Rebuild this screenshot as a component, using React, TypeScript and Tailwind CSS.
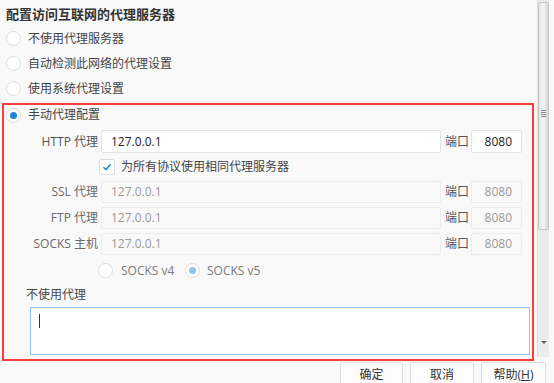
import React from 'react';

const font = { fontFamily: '"Open Sans", "Noto Sans CJK SC", sans-serif' };

function Radio({ checked, disabled }: { checked?: boolean; disabled?: boolean }) {
    return (
        <span className="w-[15px] h-[15px] rounded-full border border-[#dcdcdc] bg-white flex items-center justify-center shrink-0">
            {checked && (
                <span className={`w-[7px] h-[7px] rounded-full ${disabled ? 'bg-[#8fc5ea]' : 'bg-[#1e88d8]'}`} />
            )}
        </span>
    );
}

function ProxyRow({ label, host, port, enabled, rowClass }: { label: string; host: string; port: string; enabled?: boolean; rowClass: string }) {
    const box = enabled ? 'bg-white border-[#e3e3e3] text-[#222]' : 'bg-[#f9f9f9] border-[#ececec] text-[#9a9a9a]';
    return (
        <div className={`flex items-center ${rowClass}`}>
            <div className={`w-[95px] shrink-0 pr-[1px] text-right text-[12px] whitespace-nowrap ${enabled ? 'text-[#555]' : 'text-[#6a6a6a]'}`}>{label}</div>
            <div className={`ml-[2px] w-[340px] shrink-0 h-full border rounded-[2px] flex items-center pl-[9px] text-[12px] ${box}`}>{host}</div>
            <div className="ml-[4px] w-[24px] shrink-0 whitespace-nowrap text-[12px] text-[#555]">端口</div>
            <div className={`ml-[2px] w-[51px] shrink-0 h-full border rounded-[2px] flex items-center justify-end pr-[9px] text-[12px] ${box}`}>{port}</div>
        </div>
    );
}

export default function App() {
    return (
        <div className="w-[554px] h-[383px] overflow-hidden bg-[#f9f9f9] text-[#444]" style={font}>
            <div className="flex">
                <div className="w-[536px]">
                    <div className="h-[26px] pl-[6px] pt-[6px] text-[13px] leading-[16px] font-bold text-[#333]">配置访问互联网的代理服务器</div>
                    {['不使用代理服务器', '自动检测此网络的代理设置', '使用系统代理设置'].map(t => (
                        <div key={t} className="h-[25px] flex items-center pl-[6px] gap-[7px] text-[12px]">
                            <Radio />
                            <span>{t}</span>
                        </div>
                    ))}
                    <div className="ml-[2px] mt-[2px] w-[532px] border-2 border-[#ff3c3c] pb-[4px]">
                        <div className="h-[20px] flex items-center pl-[2px] gap-[7px] text-[12px]">
                            <Radio checked />
                            <span>手动代理配置</span>
                        </div>
                        <ProxyRow label="HTTP 代理" host="127.0.0.1" port="8080" enabled rowClass="mt-[5px] h-[23px]" />
                        <div className="h-[28px] flex items-center pl-[95px] gap-[6px] text-[12px] text-[#444]">
                            <span className="w-[16px] h-[16px] rounded-[2px] border border-[#dcdcdc] bg-white flex items-center justify-center">
                                <svg width="10" height="10" viewBox="0 0 10 10">
                                    <path d="M1.5 5.2 L4 7.6 L8.6 2.2" fill="none" stroke="#1e88d8" strokeWidth="1.5" />
                                </svg>
                            </span>
                            <span>为所有协议使用相同代理服务器</span>
                        </div>
                        <ProxyRow label="SSL 代理" host="127.0.0.1" port="8080" rowClass="h-[22px]" />
                        <ProxyRow label="FTP 代理" host="127.0.0.1" port="8080" rowClass="mt-[4px] h-[22px]" />
                        <ProxyRow label="SOCKS 主机" host="127.0.0.1" port="8080" rowClass="mt-[4px] h-[22px]" />
                        <div className="h-[31px] flex items-center pl-[94px] text-[12px] text-[#7a7a7a]">
                            <Radio />
                            <span className="ml-[8px] w-[64px]">SOCKS v4</span>
                            <Radio checked disabled />
                            <span className="ml-[7px]">SOCKS v5</span>
                        </div>
                        <div className="h-[18px] flex items-center pl-[22px] text-[12px] text-[#444]">不使用代理</div>
                        <div className="ml-[26px] mt-[3px] w-[500px] h-[48px] border border-[#8ec4f2] bg-white pl-[8px] pt-[6px]">
                            <div className="w-[1px] h-[14px] bg-[#333]" />
                        </div>
                    </div>
                </div>
                <div className="ml-[1px] w-[12px] h-[357px] bg-[#ececec] flex flex-col border-l border-[#e0e0e0]">
                    <div className="mt-[2px] h-[228px] rounded-[2px] border border-[#c4c4c4] bg-gradient-to-r from-[#e6e6e6] via-[#f4f4f4] to-[#d8d8d8] flex items-end justify-center pb-[112px]">
                        <div className="flex flex-col gap-[1px]">
                            <span className="w-[5px] h-[1px] bg-[#888]" />
                            <span className="w-[5px] h-[1px] bg-[#888]" />
                            <span className="w-[5px] h-[1px] bg-[#888]" />
                            <span className="w-[5px] h-[1px] bg-[#888]" />
                        </div>
                    </div>
                    <div className="flex-1" />
                    <div className="h-[16px] flex items-start justify-center">
                        <span className="w-0 h-0 border-l-[3px] border-r-[3px] border-t-[3px] border-l-transparent border-r-transparent border-t-[#666]" />
                    </div>
                </div>
            </div>
            <div className="flex pl-[340px] gap-[7px] mt-[1px]">
                {['确定', '取消', '帮助'].map((t, i) => (
                    <div key={t} className={`h-[26px] border border-[#dedede] bg-[#fcfcfc] rounded-[2px] flex items-center justify-center text-[12px] text-[#333] ${i === 0 ? 'w-[63px]' : i === 1 ? 'w-[64px]' : 'w-[65px]'}`}>
                        {t}
                        {i === 2 && <span>(<span className="underline">H</span>)</span>}
                    </div>
                ))}
            </div>
        </div>
    );
}
